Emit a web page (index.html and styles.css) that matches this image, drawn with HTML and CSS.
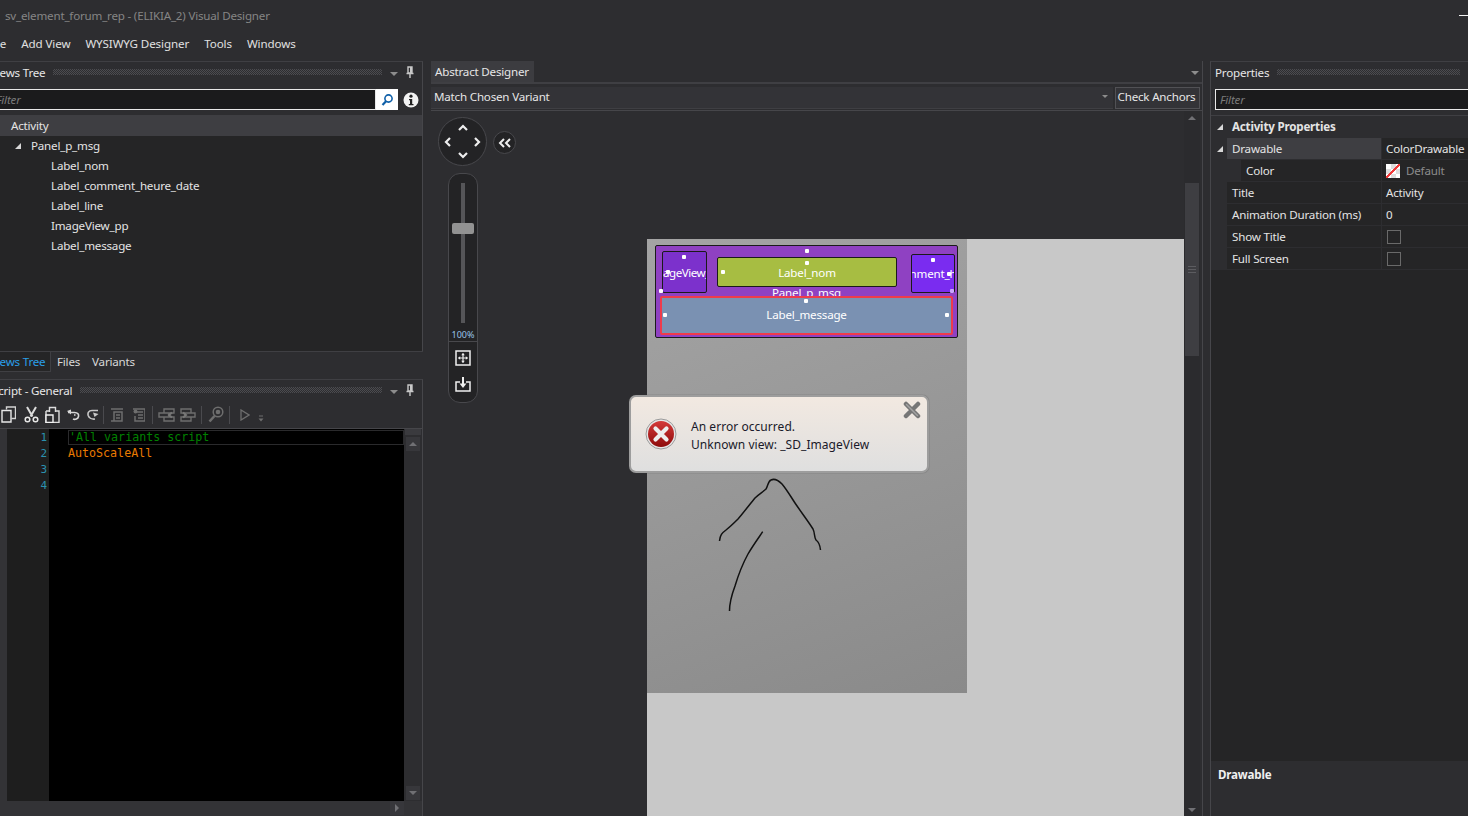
FILE: index.html
```html
<!DOCTYPE html>
<html lang="en">
<head>
    <meta charset="UTF-8">
    <title>sv_element_forum_rep - (ELIKIA_2) Visual Designer</title>
    <link rel="stylesheet" href="styles.css">
</head>
<body>
<div class="app">
    <div class="titlebar">
        <span>sv_element_forum_rep - (ELIKIA_2) Visual Designer</span>
        <span class="win-min"></span>
    </div>
    <div class="menubar">
        <span class="menu-file">File</span>
        <span>Add View</span>
        <span>WYSIWYG Designer</span>
        <span>Tools</span>
        <span>Windows</span>
    </div>

    <div class="workspace">
        <!-- left column: views tree + script -->
        <div class="left">
            <div class="panel tree-panel">
                <div class="panel-head">
                    <span class="cut-title">Views Tree</span>
                    <span class="grip"></span>
                    <span class="tri-down"></span>
                    <svg class="pin" width="8" height="12" viewBox="0 0 8 12"><path d="M2 1h4v6H2z M0.5 7.5h7 M4 8v4" fill="none" stroke="#c8c8c8" stroke-width="1.4"/><path d="M4 1h2v6H4z" fill="#c8c8c8"/></svg>
                </div>
                <div class="filter-row">
                    <div class="filter-box"><span class="filter-text cut-filter">Filter</span></div>
                    <span class="filter-btn">
                        <svg width="16" height="16" viewBox="0 0 16 16"><circle cx="9.5" cy="6.5" r="3.6" fill="none" stroke="#0e5fa8" stroke-width="1.6"/><path d="M7 9.2 3.5 13" stroke="#0e5fa8" stroke-width="2.2"/></svg>
                    </span>
                    <svg class="info" width="16" height="16" viewBox="0 0 16 16"><circle cx="8" cy="8" r="7.5" fill="#f2f2f2"/><circle cx="8" cy="4.2" r="1.6" fill="#222"/><path d="M6 7h3.2v5H10.500v1.300H5.800V12H7V8.300H6z" fill="#222"/></svg>
                </div>
                <div class="tree-root">Activity</div>
                <div class="tree">
                    <div class="tree-row lvl1"><span class="tri-open"></span>Panel_p_msg</div>
                    <div class="tree-row lvl2">Label_nom</div>
                    <div class="tree-row lvl2">Label_comment_heure_date</div>
                    <div class="tree-row lvl2">Label_line</div>
                    <div class="tree-row lvl2">ImageView_pp</div>
                    <div class="tree-row lvl2">Label_message</div>
                </div>
            </div>
            <div class="tabs">
                <span class="tab active"><span class="cut-tab">Views Tree</span></span>
                <span class="tab">Files</span>
                <span class="tab">Variants</span>
            </div>
            <div class="panel script-panel">
                <div class="panel-head">
                    <span class="cut-script">Script - General</span>
                    <span class="grip"></span>
                    <span class="tri-down"></span>
                    <svg class="pin" width="8" height="12" viewBox="0 0 8 12"><path d="M2 1h4v6H2z M0.5 7.5h7 M4 8v4" fill="none" stroke="#c8c8c8" stroke-width="1.4"/><path d="M4 1h2v6H4z" fill="#c8c8c8"/></svg>
                </div>
                <div class="toolbar">
                    <svg class="ic-copy" width="15" height="17" viewBox="0 0 15 17"><path d="M5.500 3.500V1h9v11.500h-4" fill="none" stroke="#d4d4d4" stroke-width="1.400"/><path d="M1 4.500h9V16H1z" fill="#2d2d30" stroke="#e8e8e8" stroke-width="1.400"/></svg>
                    <svg class="ic-cut" width="15" height="17" viewBox="0 0 15 17"><path d="M3 1l5.500 9.500M12 1 6.500 10.500" stroke="#dcdcdc" stroke-width="2" fill="none"/><circle cx="3.500" cy="13.500" r="2.300" fill="none" stroke="#e8e8e8" stroke-width="1.500"/><circle cx="11.500" cy="13.500" r="2.300" fill="none" stroke="#e8e8e8" stroke-width="1.500"/></svg>
                    <svg class="ic-paste" width="15" height="17" viewBox="0 0 15 17"><path d="M1 5h3M11 5h3v11.500H1V5" fill="none" stroke="#dcdcdc" stroke-width="1.400"/><path d="M4.500 6V1.500h6V6" fill="none" stroke="#dcdcdc" stroke-width="1.400"/><path d="M1 9h7v7.500H1z" fill="#2d2d30" stroke="#f0f0f0" stroke-width="1.400"/></svg>
                    <svg class="ic-undo" width="13" height="12" viewBox="0 0 13 12"><path d="M1 3.500h6.500c3.500 0 4.500 2 4 4-.5 2.500-3.500 3.500-5.500 2.500M7 6h1.500" fill="none" stroke="#d8d8d8" stroke-width="1.600"/><path d="M0 2l4-1.500v5z" fill="#d8d8d8"/></svg>
                    <svg class="ic-redo" width="12" height="12" viewBox="0 0 12 12"><path d="M11 1.500H5C1.500 1.500.5 4 1.200 6.500c.8 2.500 3.800 4 6.800 3.500" fill="none" stroke="#c8c8c8" stroke-width="1.600"/><path d="M11.500 5 6 3.500 7.500 8z" fill="#c8c8c8"/></svg>
                    <span class="tb-sep sep1"></span>
                    <svg class="ic-dim ic-a" width="12" height="14" viewBox="0 0 12 14"><path d="M0 1h12M3 4h8v9H3zM0 13h3M5 7h4M5 10h4" fill="none" stroke="#6e6e6e" stroke-width="1.500"/></svg>
                    <svg class="ic-dim ic-b" width="12" height="14" viewBox="0 0 12 14"><path d="M0 1h12v12H2V8M4 4h6M5 7h5M5 10h5" fill="none" stroke="#6e6e6e" stroke-width="1.500"/><circle cx="2.500" cy="3.500" r="2" fill="#6e6e6e"/></svg>
                    <span class="tb-sep sep2"></span>
                    <svg class="ic-dim ic-c" width="17" height="14" viewBox="0 0 17 14"><path d="M6 1h10v4H6zM1 5h10v4H1zM6 9h10v4H6z" fill="none" stroke="#6e6e6e" stroke-width="1.400"/><path d="M14 4.500 11 7l3 2.500" fill="none" stroke="#777" stroke-width="2"/></svg>
                    <svg class="ic-dim ic-d" width="16" height="14" viewBox="0 0 16 14"><path d="M1 1h10v4H1zM5 5h10v4H5zM1 9h10v4H1z" fill="none" stroke="#6e6e6e" stroke-width="1.400"/><path d="M3 4.500 6 7 3 9.500" fill="none" stroke="#777" stroke-width="2"/></svg>
                    <span class="tb-sep sep3"></span>
                    <svg class="ic-dim ic-e" width="16" height="17" viewBox="0 0 16 17"><circle cx="10" cy="6" r="4.800" fill="none" stroke="#6e6e6e" stroke-width="1.500"/><path d="M6.500 10 1.500 15.500" stroke="#6e6e6e" stroke-width="2.600"/><circle cx="10" cy="6" r="2.300" fill="#6e6e6e"/></svg>
                    <span class="tb-sep sep4"></span>
                    <svg class="ic-dim ic-play" width="10" height="12" viewBox="0 0 10 12"><path d="M1 1v10l8-5z" fill="none" stroke="#6e6e6e" stroke-width="1.300"/></svg>
                    <svg class="ic-dim ic-more" width="6" height="7" viewBox="0 0 6 7"><path d="M1 1h4" stroke="#6e6e6e"/><path d="M0.500 3.500h5L3 6.500z" fill="#6e6e6e"/></svg>
                </div>
                <div class="editor">
                    <div class="gutter">
                        <div class="num">1</div>
                        <div class="num">2</div>
                        <div class="num">3</div>
                        <div class="num">4</div>
                    </div>
                    <div class="code">
                        <div class="code-line current"><span class="c-comment">'All variants script</span></div>
                        <div class="code-line"><span class="c-kw">AutoScaleAll</span></div>
                    </div>
                    <div class="vscroll editor-scroll">
                        <span class="scroll-cap"></span>
                        <span class="scroll-btn"><i class="arrow-up"></i></span>
                        <span class="scroll-fill"></span>
                        <span class="scroll-btn"><i class="arrow-down"></i></span>
                    </div>
                </div>
                <div class="hscroll"><span class="scroll-btn"><i class="arrow-right"></i></span></div>
            </div>
        </div>

        <!-- center: abstract designer -->
        <div class="center">
            <div class="doc-tabs">
                <span class="doc-tab">Abstract Designer</span>
                <span class="tri-down doc-tri"></span>
            </div>
            <div class="variant-row">
                <div class="combo"><span>Match Chosen Variant</span><span class="tri-small"></span></div>
                <span class="check-btn">Check Anchors</span>
            </div>
            <div class="designer">
                <div class="canvas">
                    <div class="pad">
                        <svg width="12" height="8" class="pad-up" viewBox="0 0 12 8"><path d="M2 6l4-4 4 4" fill="none" stroke="#eee" stroke-width="2.200"/></svg>
                        <div class="pad-mid">
                            <svg width="8" height="12" viewBox="0 0 8 12"><path d="M6 2 2 6l4 4" fill="none" stroke="#eee" stroke-width="2.200"/></svg>
                            <svg width="8" height="12" viewBox="0 0 8 12"><path d="M2 2l4 4-4 4" fill="none" stroke="#eee" stroke-width="2.200"/></svg>
                        </div>
                        <svg width="12" height="8" viewBox="0 0 12 8"><path d="M2 2l4 4 4-4" fill="none" stroke="#eee" stroke-width="2.200"/></svg>
                    </div>
                    <div class="collapse">
                        <svg width="14" height="12" viewBox="0 0 14 12"><path d="M6 2 2 6l4 4M12 2 8 6l4 4" fill="none" stroke="#eee" stroke-width="2"/></svg>
                    </div>
                    <div class="zoom-pill">
                        <div class="zoom-track"><span class="zoom-thumb"></span></div>
                        <div class="zoom-val">100%</div>
                        <div class="zoom-icons">
                            <svg width="16" height="16" viewBox="0 0 16 16"><path d="M1 1h14v14H1z" fill="none" stroke="#f0f0f0" stroke-width="1.500"/><path d="M8 3.500v9M3.500 8h9" stroke="#f0f0f0" stroke-width="1.200"/><path d="M8 3 6.200 5.200h3.600zM8 13l-1.800-2.200h3.600zM3 8l2.200-1.800v3.600zM13 8l-2.200-1.800v3.600z" fill="#f0f0f0"/></svg>
                            <svg width="16" height="15" viewBox="0 0 16 15"><path d="M5 5H1v9h14V5h-4" fill="none" stroke="#f0f0f0" stroke-width="1.500"/><path d="M8 0v8" stroke="#f0f0f0" stroke-width="2"/><path d="M4.500 6.500h7L8 11z" fill="#f0f0f0"/></svg>
                        </div>
                    </div>

                    <div class="sheet">
                        <div class="device"></div>
                    </div>

                    <div class="view v-panel"><span class="v-panel-label">Panel_p_msg</span></div>
                    <div class="view v-image"><span>ImageView_</span></div>
                    <div class="view v-nom">Label_nom</div>
                    <div class="view v-comment"><span>nment_h</span></div>
                    <div class="view v-message">Label_message</div>
                    <i class="dot d1"></i><i class="dot d2"></i><i class="dot d3"></i><i class="dot d4"></i>
                    <i class="dot d5"></i><i class="dot d6"></i><i class="dot d7"></i><i class="dot d8"></i>
                    <i class="dot d9"></i><i class="dot d10"></i><i class="dot d11"></i><i class="dot d12"></i>

                    <svg class="scribble" width="120" height="140" viewBox="710 475 120 140">
                        <path d="M719.500 540C720 534 722 532 726 529 731 525 735 521 738 518 744 511 750 503 755 497 759 493 763 491 766 488 768 485 768 480 771 479 775 477 779 480 782 483 787 489 791 496 795 502 801 511 808 520 813 528 815 532 814 536 816 539 819 541 820 544 820.500 549" fill="none" stroke="#111" stroke-width="1.500"/>
                        <path d="M762.700 530.700C757 539 752 546 748 553 742 564 738 575 735 585 732 593 729.500 602 729.500 610" fill="none" stroke="#111" stroke-width="1.500"/>
                    </svg>

                    <div class="toast">
                        <svg width="32" height="32" viewBox="0 0 32 32"><defs><linearGradient id="redg" x1="0" y1="0" x2="0" y2="1"><stop offset="0" stop-color="#d43a3a"/><stop offset="1" stop-color="#8e0b0b"/></linearGradient></defs><circle cx="16" cy="16" r="15" fill="#e6e6e6" stroke="#9a9a9a"/><circle cx="16" cy="16" r="13" fill="url(#redg)"/><path d="M10.500 10.500l11 11M21.500 10.500l-11 11" stroke="#eee" stroke-width="4.200" stroke-linecap="round"/></svg>
                        <div class="toast-text">
                            <div>An error occurred.</div>
                            <div>Unknown view: _SD_ImageView</div>
                        </div>
                        <svg class="toast-x" width="18" height="18" viewBox="0 0 18 18"><path d="M3 3l12 12M15 3 3 15" stroke="#767676" stroke-width="4.500" stroke-linecap="round"/><path d="M3.500 3.500l11 11" stroke="#a2a2a2" stroke-width="1.500" stroke-linecap="round"/></svg>
                    </div>
                </div>
                <div class="vscroll canvas-scroll">
                    <span class="scroll-btn"><i class="arrow-up"></i></span>
                    <span class="scroll-gap"></span>
                    <span class="scroll-thumb"><b></b><b></b><b></b></span>
                    <span class="scroll-fill"></span>
                    <span class="scroll-btn"><i class="arrow-down"></i></span>
                </div>
            </div>
        </div>

        <!-- right: properties -->
        <div class="right">
            <div class="panel-head">
                <span>Properties</span>
                <span class="grip"></span>
            </div>
            <div class="filter-row prop-filter">
                <div class="filter-box"><span class="filter-text">Filter</span></div>
            </div>
            <div class="props">
                <div class="prop-group"><span class="tri-open"></span>Activity Properties</div>
                <div class="prop-row">
                    <span class="prop-exp"><span class="tri-open"></span></span>
                    <span class="prop-name sel">Drawable</span>
                    <span class="prop-val">ColorDrawable</span>
                </div>
                <div class="prop-row">
                    <span class="prop-exp wide"></span>
                    <span class="prop-name">Color</span>
                    <span class="prop-val dim"><span class="swatch"></span>Default</span>
                </div>
                <div class="prop-row">
                    <span class="prop-exp"></span>
                    <span class="prop-name">Title</span>
                    <span class="prop-val">Activity</span>
                </div>
                <div class="prop-row">
                    <span class="prop-exp"></span>
                    <span class="prop-name">Animation Duration (ms)</span>
                    <span class="prop-val">0</span>
                </div>
                <div class="prop-row">
                    <span class="prop-exp"></span>
                    <span class="prop-name">Show Title</span>
                    <span class="prop-val"><span class="check"></span></span>
                </div>
                <div class="prop-row">
                    <span class="prop-exp"></span>
                    <span class="prop-name">Full Screen</span>
                    <span class="prop-val"><span class="check"></span></span>
                </div>
            </div>
            <div class="prop-help">Drawable</div>
        </div>
    </div>
</div>
</body>
</html>
```

FILE: styles.css
```css
* { box-sizing: border-box; }
html, body { margin: 0; padding: 0; }
body { background: #2d2d30; color: #e4e4e4; font-family: "Noto Sans", "Open Sans", sans-serif; font-size: 11.6px; letter-spacing: -0.2px; }
.app { width: 1468px; height: 816px; overflow: hidden; display: flex; flex-direction: column; background: #2d2d30; }

.titlebar { height: 31px; padding: 0 0 0 5px; display: flex; align-items: center; justify-content: space-between; color: #858585; font-size: 11.6px; }
.win-min { width: 9px; height: 1px; background: #f2f2f2; }
.menubar { height: 30px; display: flex; align-items: center; color: #e0e0e0; padding-bottom: 5px; letter-spacing: -0.1px; }
.menubar span { margin-right: 15px; white-space: nowrap; }
.menubar .menu-file { margin-left: -12px; margin-right: 15px; }

.workspace { flex: 1; min-height: 0; display: flex; }
.left { width: 423px; display: flex; flex-direction: column; flex-shrink: 0; }
.center { width: 772px; margin-left: 8px; flex-shrink: 0; display: flex; flex-direction: column; border-right: 1px solid #46464a; }
.right { flex: 1; margin-left: 7px; border-left: 1px solid #46464a; border-top: 1px solid #3f3f43; display: flex; flex-direction: column; min-width: 0; }

/* docked panels */
.panel { border-top: 1px solid #3f3f43; border-right: 1px solid #46464a; display: flex; flex-direction: column; overflow: hidden; }
.tree-panel { height: 290px; }
.script-panel { flex: 1; min-height: 0; margin-top: 7px; }
.panel-head { height: 22px; display: flex; align-items: center; padding: 0 5px 2px 5px; color: #e6e6e6; flex-shrink: 0; white-space: nowrap; }
.cut-title { margin-left: -15px; }
.cut-script { margin-left: -13px; }
.grip { flex: 1; height: 6px; margin: 0 8px; background-image: repeating-conic-gradient(#4c4c50 0 25%, transparent 0 50%); background-size: 2px 2px; }
.tri-down { width: 0; height: 0; border-left: 4px solid transparent; border-right: 4px solid transparent; border-top: 4px solid #8c8c8c; margin: 4px 8px 0 0; }
.pin { margin-right: 3px; }

.filter-row { height: 31px; display: flex; align-items: center; padding: 0 3px 0 0; flex-shrink: 0; }
.filter-box { flex: 1; height: 21px; background: #1b1b1c; border: 1px solid #e8e8e8; border-left: 0; padding-left: 0; display: flex; align-items: center; overflow: hidden; }
.filter-text { color: #7a7a7a; font-style: italic; }
.cut-filter { margin-left: -4px; }
.filter-btn { width: 22px; height: 21px; background: #fff; display: flex; align-items: center; justify-content: center; }
.info { margin-left: 5px; }

.tree-root { height: 21px; background: #3e3e42; padding-left: 11px; line-height: 21px; flex-shrink: 0; }
.tree { flex: 1; background: #252526; padding-top: 0; }
.tree-row { height: 20px; line-height: 20px; white-space: nowrap; }
.lvl1 { padding-left: 15px; display: flex; align-items: center; }
.lvl2 { padding-left: 51px; }
.tri-open { width: 0; height: 0; border-left: 6px solid transparent; border-bottom: 6px solid #d8d8d8; margin-right: 10px; flex-shrink: 0; }

.tabs { height: 21px; display: flex; border-top: 1px solid #3f3f43; flex-shrink: 0; }
.tab { padding: 0 8px; line-height: 19px; color: #d8d8d8; white-space: nowrap; }
.tab.active { width: 51px; padding: 0; color: #2a9fe8; background: #252526; border-right: 1px solid #3f3f43; border-bottom: 1px solid #3f3f43; overflow: hidden; }
.cut-tab { display: block; margin-left: -10px; }
.tab + .tab { padding-left: 6px; padding-right: 6px; }

/* script toolbar */
.toolbar { height: 26px; display: flex; align-items: center; flex-shrink: 0; padding-bottom: 1px; }
.toolbar svg { flex-shrink: 0; }
.ic-copy { margin-left: 1px; }
.ic-cut { margin-left: 8px; }
.ic-paste { margin-left: 6px; }
.ic-undo { margin-left: 7px; }
.ic-redo { margin-left: 7px; }
.tb-sep { width: 1px; height: 18px; background: #4a4a4e; flex-shrink: 0; }
.sep1 { margin-left: 4px; }
.ic-a { margin-left: 7px; }
.ic-b { margin-left: 10px; }
.sep2 { margin-left: 7px; }
.ic-c { margin-left: 5px; }
.ic-d { margin-left: 5px; }
.sep3 { margin-left: 5px; }
.ic-e { margin-left: 6px; }
.sep4 { margin-left: 5px; }
.ic-play { margin-left: 10px; }
.ic-more { margin-left: 8px; margin-top: 8px; }

/* code editor */
.editor { flex: 1; min-height: 0; display: flex; border-top: 1px solid #46464a; background: #000; }
.gutter { width: 49px; border-left: 7px solid #333336; background: #1e1e1e; flex-shrink: 0; padding-top: 1px; font-family: "DejaVu Sans Mono", monospace; font-size: 11px; letter-spacing: 0; color: #2b91af; text-align: right; padding-right: 2px; }
.num { height: 16px; line-height: 16px; }
.code { flex: 1; padding: 0 0 0 19px; font-family: "DejaVu Sans Mono", monospace; font-size: 11.66px; letter-spacing: 0; }
.code-line { height: 16px; line-height: 17px; white-space: nowrap; }
.code-line.current { background: #000; border: 1px solid #2a2a2c; height: 15px; margin-top: 1px; line-height: 13px; padding-left: 0; }
.c-comment { color: #008000; }
.c-kw { color: #ea7a00; }
.vscroll { width: 18px; background: #2d2d30; display: flex; flex-direction: column; align-items: center; flex-shrink: 0; }
.scroll-cap { width: 16px; height: 6px; background: #3a3a3e; }
.scroll-btn { width: 14px; height: 14px; background: #37373b; display: flex; align-items: center; justify-content: center; flex-shrink: 0; }
.scroll-fill { flex: 1; }
.editor-scroll .scroll-cap { margin-bottom: 1px; }
.editor-scroll .scroll-btn { margin: 1px 0; }
.arrow-up, .arrow-down, .arrow-right { display: block; width: 0; height: 0; }
.arrow-up { border-left: 4px solid transparent; border-right: 4px solid transparent; border-bottom: 4px solid #707074; }
.arrow-down { border-left: 4px solid transparent; border-right: 4px solid transparent; border-top: 4px solid #707074; }
.arrow-right { border-top: 4px solid transparent; border-bottom: 4px solid transparent; border-left: 4px solid #707074; }
.hscroll { height: 15px; background: #333336; display: flex; justify-content: flex-end; padding-right: 18px; flex-shrink: 0; }

/* designer */
.doc-tabs { height: 21px; display: flex; align-items: flex-start; justify-content: space-between; border-bottom: 2px solid #3f3f43; flex-shrink: 0; box-sizing: content-box; }
.doc-tab { width: 103px; height: 21px; line-height: 21px; background: #3c3c40; padding-left: 4px; color: #e6e6e6; white-space: nowrap; }
.doc-tri { margin: 10px 3px 0 0; }
.variant-row { height: 26px; display: flex; align-items: center; gap: 2px; flex-shrink: 0; padding: 1px 2px 0 0; }
.combo { flex: 1; height: 22px; display: flex; align-items: center; justify-content: space-between; padding: 0 5px 1px 3px; color: #e6e6e6; background: #333337; border-bottom: 1px solid #3f3f43; }
.tri-small { width: 0; height: 0; border-left: 3px solid transparent; border-right: 3px solid transparent; border-top: 3px solid #8c8c8c; }
.check-btn { width: 85px; height: 22px; line-height: 18px; padding-right: 2px; text-align: center; background: #333337; border: 1px solid #515155; color: #e6e6e6; white-space: nowrap; }
.designer { flex: 1; min-height: 0; display: flex; border-top: 1px solid #46464a; padding-right: 2px; }
.canvas { flex: 1; position: relative; overflow: hidden; background: #2d2d30; }
.canvas-scroll { width: 16px; background: #2b2b2e; }
.canvas-scroll .scroll-btn { background: transparent; height: 13px; }
.scroll-gap { height: 59px; }
.scroll-thumb { width: 14px; height: 173px; background: #3e3e42; display: flex; flex-direction: column; align-items: center; justify-content: center; gap: 2px; }
.scroll-thumb b { display: block; width: 8px; height: 1px; background: #5c5c60; }

/* free canvas: the tool pad, the device sheet and its views */
.pad { position: absolute; left: 7px; top: 6px; width: 49px; height: 49px; border-radius: 50%; background: #232325; border: 1px solid #48484c; display: flex; flex-direction: column; align-items: center; justify-content: space-between; padding: 6px 0; }
.pad-mid { width: 100%; display: flex; justify-content: space-between; padding: 0 5px; }
.collapse { position: absolute; left: 62px; top: 20px; width: 23px; height: 23px; border-radius: 50%; background: #232325; border: 1px solid #48484c; display: flex; align-items: center; justify-content: center; }
.zoom-pill { position: absolute; left: 17px; top: 62px; width: 30px; height: 230px; border-radius: 12px; background: #232325; border: 1px solid #48484c; display: flex; flex-direction: column; align-items: center; }
.zoom-track { position: relative; width: 4px; height: 140px; margin-top: 9px; background: #555558; flex-shrink: 0; }
.zoom-thumb { position: absolute; left: -9px; top: 40px; width: 22px; height: 11px; background: #929292; border-radius: 2px; }
.zoom-val { font-size: 9px; letter-spacing: 0; color: #9ac4e8; height: 19px; line-height: 24px; border-bottom: 1px solid #48484c; width: 100%; text-align: center; }
.zoom-icons { display: flex; flex-direction: column; align-items: center; gap: 11px; margin-top: 8px; }

.sheet { position: absolute; left: 216px; top: 128px; width: 537px; height: 600px; background: #c8c8c8; }
.device { width: 320px; height: 454px; background: linear-gradient(160deg, #a4a4a4, #8a8a8a); }
.view { position: absolute; color: #fff; display: flex; align-items: center; justify-content: center; white-space: nowrap; overflow: hidden; border: 1px solid #1a1a1a; }
.v-panel { left: 224px; top: 134px; width: 303px; height: 93px; background: #8f41c2; border-radius: 2px; }
.v-panel-label { position: absolute; left: 116px; top: 39px; }
.v-image { left: 231px; top: 140px; width: 45px; height: 42px; background: #7c31cc; border-radius: 2px; padding-right: 10px; letter-spacing: -0.5px; }
.v-nom { left: 286px; top: 146px; width: 180px; height: 30px; background: #a7bd42; border-radius: 2px; }
.v-comment { left: 480px; top: 143px; width: 44px; height: 39px; background: #7a2cf0; border-radius: 2px; }
.v-message { left: 229px; top: 185px; width: 293px; height: 39px; padding-bottom: 2px; background: #7a91b2; border: 2px solid #ef3b4b; border-radius: 2px; }
.dot { position: absolute; width: 4px; height: 4px; background: #fff; border-radius: 1px; }
.d1 { left: 374px; top: 138px; }
.d2 { left: 374px; top: 150px; }
.d3 { left: 290px; top: 159px; }
.d4 { left: 251px; top: 144px; }
.d5 { left: 500px; top: 147px; }
.d6 { left: 228px; top: 178px; }
.d7 { left: 373px; top: 188px; }
.d8 { left: 232px; top: 202px; }
.d9 { left: 514px; top: 202px; }
.d10 { left: 235px; top: 159px; }
.d11 { left: 516px; top: 161px; }
.d12 { left: 519px; top: 178px; background: #c9a6ff; }

.scribble { position: absolute; left: 279px; top: 365px; }
.toast { position: absolute; left: 198px; top: 284px; width: 300px; height: 78px; border: 2px solid #9d9d9d; border-radius: 7px; background: linear-gradient(#f2e9e1, #dfdfdf); display: flex; align-items: center; padding-left: 14px; color: #1a1a2a; box-shadow: 0 0 1px #444; }
.toast-text { margin-left: 14px; line-height: 18px; font-size: 12px; letter-spacing: 0.05px; padding-top: 4px; }
.toast-x { position: absolute; right: 6px; top: 4px; }

/* properties */
.right .panel-head { padding-left: 4px; padding-right: 0; }
.prop-filter { padding: 5px 0 0 4px; height: 32px; align-items: flex-start; border-bottom: 1px solid #3f3f43; }
.prop-filter .filter-box { border-left: 1px solid #e8e8e8; padding-left: 4px; border-right: 0; }
.props { flex: 1; background: #252526; }
.prop-group { height: 22px; line-height: 22px; font-weight: 700; display: flex; align-items: center; padding-left: 6px; background: #2d2d30; }
.prop-group .tri-open { margin-right: 9px; }
.prop-row { height: 22px; display: flex; line-height: 21px; border-bottom: 1px solid #2d2d30; white-space: nowrap; }
.prop-exp { width: 16px; flex-shrink: 0; background: #2d2d30; display: flex; align-items: center; padding-left: 6px; }
.prop-exp.wide { width: 30px; }
.prop-exp .tri-open { margin: 0; }
.prop-name { flex: 1; padding-left: 5px; min-width: 0; }
.prop-name.sel { background: #3e3e42; }
.prop-val { width: 87px; border-left: 1px solid #2d2d30; padding-left: 4px; display: flex; align-items: center; flex-shrink: 0; overflow: hidden; }
.prop-val.dim { color: #8c8c8c; }
.swatch { width: 14px; height: 14px; margin-right: 6px; flex-shrink: 0; background: linear-gradient(to top left, transparent 46%, #f03a3a 46%, #f03a3a 54%, transparent 54%), repeating-conic-gradient(#ddd 0 25%, #fff 0 50%) 0 0 / 10px 10px; }
.check { width: 14px; height: 14px; margin-left: 1px; border: 1px solid #6a6a6a; }
.prop-help { height: 55px; padding: 6px 0 0 7px; font-weight: 700; background: #2d2d30; flex-shrink: 0; color: #f0f0f0; }
```
